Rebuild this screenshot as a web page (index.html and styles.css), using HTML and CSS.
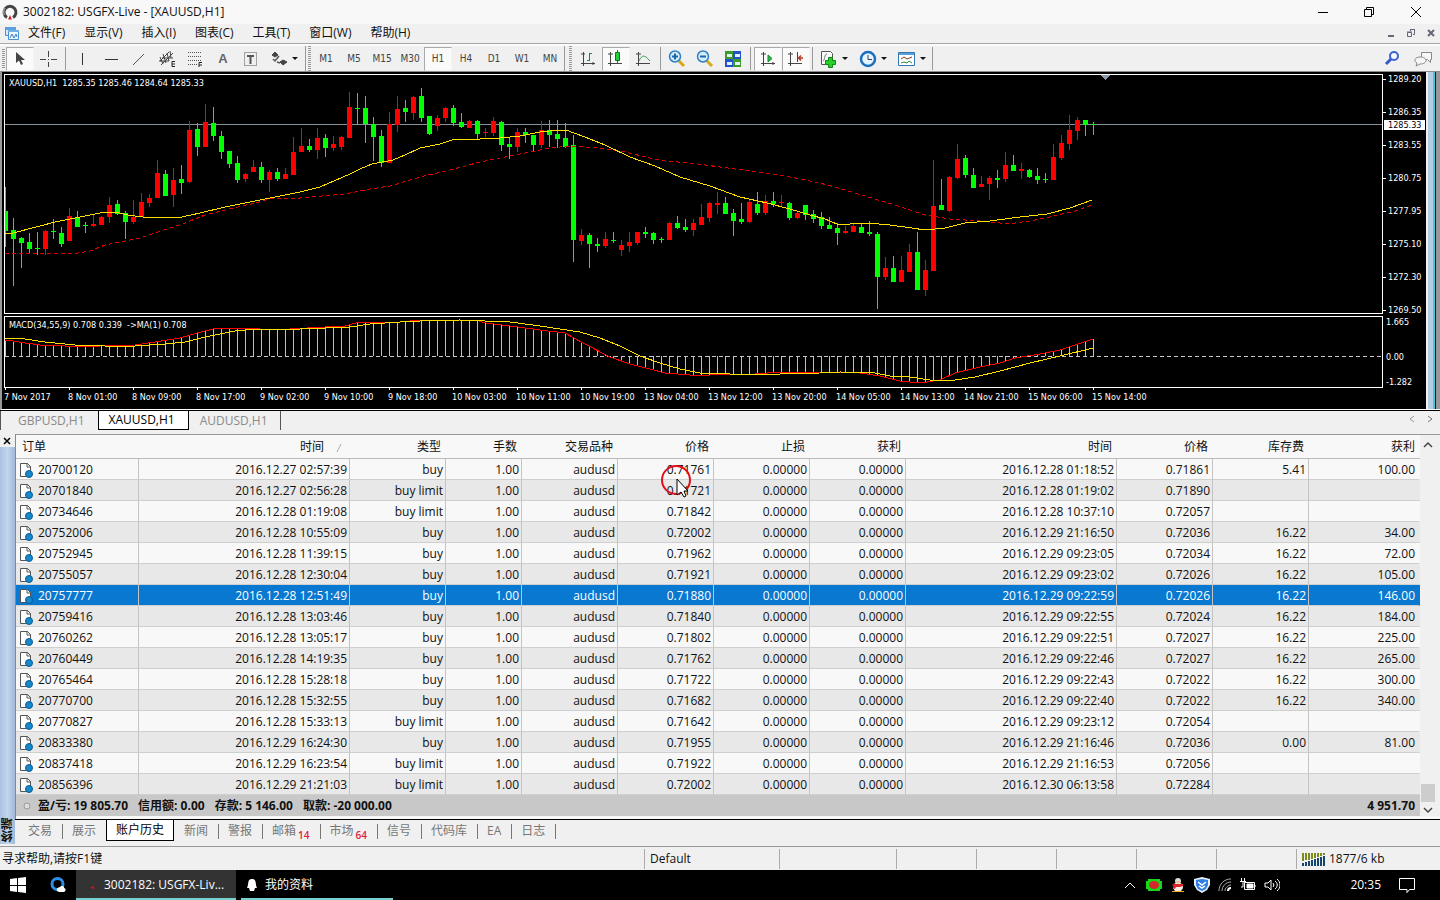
FILE: index.html
```html
<!DOCTYPE html>
<html lang="zh-CN">
<head>
<meta charset="utf-8">
<title>3002182: USGFX-Live - [XAUUSD,H1]</title>
<link rel="stylesheet" href="styles.css">
</head>
<body>
<div class="window">
  <header class="titlebar">
    <svg class="app-icon" width="16" height="16" viewBox="0 0 16 16"><path d="M5 13.5A6 6 0 1 1 11 13.5" fill="none" stroke="#444" stroke-width="3"/><path d="M2.5 11A6.500 6.500 0 0 1 3 4" fill="none" stroke="#999" stroke-width="1.500"/><path d="M6 15.500 8 11l2 4.500z" fill="#d3202a"/></svg>
    <span class="title">3002182: USGFX-Live - [XAUUSD,H1]</span>
    <div class="win-buttons">
      <button aria-label="最小化"><svg width="12" height="12"><path d="M1 6.500h10" stroke="#000"/></svg></button>
      <button aria-label="还原"><svg width="12" height="12" fill="none" stroke="#000"><path d="M1.500 3.500h7v7h-7zM3.500 3.500v-2h7v7h-2"/></svg></button>
      <button aria-label="关闭"><svg width="12" height="12"><path d="M1 1l10 10M11 1L1 11" stroke="#000"/></svg></button>
    </div>
  </header>

  <nav class="menubar">
    <svg class="doc-icon" width="16" height="14" viewBox="0 0 16 14"><path d="M1.500 1.500h10v8h-10z" fill="#d9eafa" stroke="#4b8fd0"/><path d="M1 1h11v3H1z" fill="#5da0dc"/><path d="M4.500 4.500h10v9h-10z" fill="#eef6fd" stroke="#4b8fd0"/><path d="M4 4h11v2H4z" fill="#74afe4"/><path d="M6 12l2-4 2 4 2-4 1 3" fill="none" stroke="#3c7fc4"/></svg>
    <button>文件(F)</button><button>显示(V)</button><button>插入(I)</button><button>图表(C)</button><button>工具(T)</button><button>窗口(W)</button><button>帮助(H)</button>
    <div class="child-buttons">
      <button aria-label="最小化图表"><svg width="10" height="10"><path d="M2 8h6" stroke="#667" stroke-width="2"/></svg></button>
      <button aria-label="还原图表"><svg width="10" height="10" fill="none" stroke="#667"><path d="M1.500 4.500h4v4h-4zM1 4h5M4.500 3V1.500h4v5H7M4 1.500h5"/></svg></button>
      <button aria-label="关闭图表"><svg width="10" height="10"><path d="M2 2l6 6M8 2L2 8" stroke="#667" stroke-width="2"/></svg></button>
    </div>
  </nav>

  <div class="toolbar">
    <i class="grip"></i>
    <button class="tool on" aria-label="光标"><svg viewBox="0 0 20 20"><path d="M6 3v11l3-2.500 2 4.500 2-1-2-4h4z" fill="#444"/></svg></button>
    <button class="tool" aria-label="十字线"><svg viewBox="0 0 20 20"><path d="M10.500 2v6M10.500 13v5M2 10.500h6M13 10.500h6" stroke="#444"/><path d="M10 10h1v1h-1z" fill="#444"/></svg></button>
    <i class="sep"></i>
    <button class="tool" aria-label="垂直线"><svg viewBox="0 0 20 20"><path d="M9.500 4v12" stroke="#333"/></svg></button>
    <button class="tool" aria-label="水平线"><svg viewBox="0 0 20 20"><path d="M4 10.500h13" stroke="#333"/></svg></button>
    <button class="tool" aria-label="趋势线"><svg viewBox="0 0 20 20"><path d="M4 16L15 5" stroke="#555"/></svg></button>
    <button class="tool" aria-label="等距通道"><svg viewBox="0 0 20 20" fill="none" stroke="#444"><path d="M3 12L12 3M4 16L16 4M3 8l3 7M6 5l3 9M10 4l2 8M13 2l1 7M2 12h10M5 9h11"/><path d="M18 12.500h-3v5h3M15 15h3" stroke="#222"/></svg></button>
    <button class="tool" aria-label="斐波那契"><svg viewBox="0 0 20 20"><path d="M3 3.500h14M3 7.500h14M3 11.500h14M3 15.500h9" stroke="#555" stroke-dasharray="1 1"/><path d="M17 13.500h-3V18M14 16h3" fill="none" stroke="#222"/></svg></button>
    <button class="tool letter">A</button>
    <button class="tool" aria-label="文字标签"><svg viewBox="0 0 20 20" fill="none" stroke="#555"><path d="M3.500 3.500h12v13h-12z" stroke-dasharray="1 1"/><path d="M6 7h7M9.500 7v8" stroke-width="2"/></svg></button>
    <button class="tool combo wide" aria-label="箭头"><svg viewBox="0 0 20 20"><path d="M3 6l3-3 3 3-3 2zM11 13l3-2 4 2-4 3z" fill="#444" stroke="#444"/><path d="M4 10l2 2 4-5M8 13l3 1" fill="none" stroke="#555" stroke-width="1.500"/></svg><b class="caret"></b></button>
    <i class="grip split"></i>
    <button class="tool period">M1</button><button class="tool period">M5</button><button class="tool period">M15</button><button class="tool period">M30</button><button class="tool period on">H1</button><button class="tool period">H4</button><button class="tool period">D1</button><button class="tool period">W1</button><button class="tool period">MN</button>
    <i class="grip split late"></i>
    <button class="tool" aria-label="柱状图"><svg viewBox="0 0 20 20" fill="none" stroke="#444"><path d="M5.500 3v14M3 14.500h14M3 5h4M15 13v3"/><path d="M11.500 4v8M9 11.500h3M11 4.500h3" stroke="#1b8c36"/></svg></button>
    <button class="tool on" aria-label="蜡烛图"><svg viewBox="0 0 20 20" fill="none" stroke="#444"><path d="M4.500 3v14M2 14.500h14M2 5h5"/><path d="M11.500 1v13" stroke="#087a1a"/><path d="M9.500 3.500h4v8h-4z" fill="#22d23c" stroke="#087a1a"/></svg></button>
    <button class="tool" aria-label="折线图"><svg viewBox="0 0 20 20" fill="none" stroke="#444"><path d="M4.500 3v14M2 14.500h14M2 5h5"/><path d="M5 12c3-7 6-6 11 0" stroke="#3b9c50"/></svg></button>
    <i class="sep thin"></i>
    <button class="tool" aria-label="放大"><svg viewBox="0 0 20 20"><path d="M12 12l5 5" stroke="#d8a818" stroke-width="3"/><circle cx="8" cy="7.500" r="5.500" fill="#d6ecfb" stroke="#2f7fc2" stroke-width="1.500"/><path d="M5 7.500h6M8 4.500v6" stroke="#1866ab" stroke-width="2"/></svg></button>
    <button class="tool" aria-label="缩小"><svg viewBox="0 0 20 20"><path d="M12 12l5 5" stroke="#d8a818" stroke-width="3"/><circle cx="8" cy="7.500" r="5.500" fill="#d6ecfb" stroke="#2f7fc2" stroke-width="1.500"/><path d="M5 7.500h6" stroke="#1866ab" stroke-width="2"/></svg></button>
    <button class="tool" aria-label="平铺窗口"><svg viewBox="0 0 20 20"><path d="M2 2h8v8H2zM10 10h8v8h-8z" fill="#3c9c2a"/><path d="M10 2h8v8h-8zM2 10h8v8H2z" fill="#2453c8"/><path d="M4 5h5v3H4zM12 5h5v3h-5zM4 13h5v3H4zM12 13h5v3h-5z" fill="#e4f0fc"/></svg></button>
    <i class="sep"></i>
    <button class="tool on" aria-label="自动滚动"><svg viewBox="0 0 20 20" fill="none" stroke="#444"><path d="M5.500 3v14M3 14.500h14M3 5h5M15 13v3"/><path d="M10 6v7l4-3.500z" fill="#2abb40" stroke="#14862a"/></svg></button>
    <button class="tool on" aria-label="图表平移"><svg viewBox="0 0 20 20" fill="none" stroke="#444"><path d="M4.500 3v14M2 14.500h14M2 5h5M11.500 3v10"/><path d="M17 9h-4M15 6.500L12.500 9l2.500 2.500" stroke="#b33a1a" stroke-width="1.500"/></svg></button>
    <i class="sep thin"></i>
    <button class="tool combo" aria-label="指标"><svg viewBox="0 0 20 20"><path d="M2.500 2.500h9l2 2v11h-11z" fill="#fafafa" stroke="#555"/><path d="M4 12c2 0 1-7 4-7" fill="none" stroke="#777"/><path d="M9.500 8.500h4v3h3v4h-3v3h-4v-3h-3v-4h3z" fill="#28cf28" stroke="#0a8a14"/></svg><b class="caret"></b></button>
    <button class="tool combo" aria-label="周期"><svg viewBox="0 0 20 20"><circle cx="10" cy="10" r="7" fill="#e8f4fd" stroke="#1c6fc0" stroke-width="2.500"/><path d="M10 6v4.500h4" fill="none" stroke="#345"/></svg><b class="caret"></b></button>
    <button class="tool combo" aria-label="模板"><svg viewBox="0 0 20 20"><path d="M1.500 3.500h16v13h-16z" fill="#fff" stroke="#3277b5"/><path d="M2 4h15v2H2z" fill="#5a9fd8"/><path d="M4 10l3-2 3 2 5-2" fill="none" stroke="#7c3b1c"/><path d="M4 14l3-1 3 1 2-2 3 2" fill="none" stroke="#2c8c3c"/></svg><b class="caret"></b></button>
    <i class="sep end"></i>
    <div class="tool-right">
      <button class="tool" aria-label="搜索"><svg viewBox="0 0 20 20"><path d="M9 10l-5 5" stroke="#3558c8" stroke-width="3"/><circle cx="12" cy="7" r="4" fill="#f4f8ff" stroke="#3d62d0" stroke-width="2"/></svg></button>
      <button class="tool" aria-label="聊天"><svg viewBox="0 0 20 20" fill="#f7f7f7" stroke="#888"><path d="M8.500 3.500h10v7h-1v3l-3-3h-6z"/><path d="M7 8c8 0 8 7 0 7l-4 2 1-3c-4-2-2-6 3-6z"/></svg></button>
    </div>
  </div>

  <section class="chart" aria-label="XAUUSD,H1">
    <div class="chart-grid">
      <div class="plot main-plot">
        <span class="plot-title">XAUUSD,H1&nbsp; 1285.35 1285.46 1284.64 1285.33</span>
        <svg width="100%" height="100%" shape-rendering="crispEdges"><g id="price"></g></svg>
      </div>
      <div class="axis price-axis"><span>1289.20</span><span>1286.35</span><span>1283.55</span><span>1280.75</span><span>1277.95</span><span>1275.10</span><span>1272.30</span><span>1269.50</span><strong class="price-now">1285.33</strong></div>
      <div class="plot macd-plot">
        <span class="plot-title">MACD(34,55,9) 0.708 0.339&nbsp; -&gt;MA(1) 0.708</span>
        <svg width="100%" height="100%" shape-rendering="crispEdges"><g id="macd"></g></svg>
      </div>
      <div class="axis macd-axis"><span>1.665</span><span class="zero">0.00</span><span>-1.282</span></div>
      <div class="times" id="times"></div>
    </div>
    <i class="chart-edge"></i>
  </section>

  <div class="chart-tabs">
    <button>GBPUSD,H1</button><button class="active">XAUUSD,H1</button><button class="last">AUDUSD,H1</button>
    <div class="tab-scroll"><button aria-label="向左"><svg width="6" height="8"><path d="M5 1L1 4l4 3" fill="none" stroke="#999"/></svg></button><button aria-label="向右"><svg width="6" height="8"><path d="M1 1l4 3-4 3" fill="none" stroke="#777"/></svg></button></div>
  </div>

  <section class="terminal">
    <aside class="side">
      <button aria-label="关闭终端"><svg width="8" height="8"><path d="M1 1l6 6M7 1L1 7" stroke="#000" stroke-width="1.500"/></svg></button>
      <div class="side-bar"><span>终端</span></div>
    </aside>
    <div class="terminal-body">
      <div class="table-area">
        <table>
          <colgroup><col class="c-order"><col class="c-time"><col class="c-mid"><col class="c-lots"><col class="c-mid"><col class="c-mid"><col class="c-mid"><col class="c-mid"><col class="c-time"><col class="c-mid"><col class="c-mid"><col class="c-profit"></colgroup>
          <thead><tr><th>订单</th><th class="sorted">时间<svg width="6" height="8"><path d="M1 8L5 0" stroke="#aaa"/></svg></th><th>类型</th><th>手数</th><th>交易品种</th><th>价格</th><th>止损</th><th>获利</th><th>时间</th><th>价格</th><th>库存费</th><th>获利</th></tr></thead>
          <tbody id="orders"></tbody>
          <tfoot><tr><td colspan="11"><svg width="12" height="12" viewBox="0 0 12 12"><circle cx="6" cy="6" r="3" fill="#ddd" stroke="#999"/></svg><span>盈/亏: 19 805.70</span><span>信用额: 0.00</span><span>存款: 5 146.00</span><span>取款: -20 000.00</span></td><td>4 951.70</td></tr></tfoot>
        </table>
        <div class="scrollbar">
          <svg width="10" height="8"><path d="M1 6l4-4 4 4" fill="none" stroke="#444" stroke-width="1.500"/></svg>
          <i class="thumb"></i>
          <svg width="10" height="8"><path d="M1 2l4 4 4-4" fill="none" stroke="#444" stroke-width="1.500"/></svg>
        </div>
      </div>
      <div class="panel-tabs">
        <button>交易</button><button class="before">展示</button><button class="active">账户历史</button><button class="after">新闻</button><button>警报</button><button>邮箱<sub>14</sub></button><button>市场<sub>64</sub></button><button>信号</button><button>代码库</button><button>EA</button><button>日志</button>
      </div>
    </div>
  </section>

  <footer class="status">
    <span class="s-help">寻求帮助,请按F1键</span><span class="s-a">Default</span><span class="s-b"></span><span class="s-c"></span><span class="s-c"></span><span class="s-c"></span><span class="s-c"></span><span class="s-c"></span>
    <span class="s-net"><svg width="24" height="14"><path d="M1 1v8M4 1v7M7 1v7M10 1v6M13 1v5M16 1v4M19 1v3M22 1v2" stroke="#7d8b1c" stroke-width="2"/><path d="M1 11v3M4 10v4M7 9v5M10 8v6M13 7v7M16 6v8M19 5v9M22 4v10" stroke="#16466c" stroke-width="2"/></svg>1877/6 kb</span>
  </footer>

  <div class="taskbar">
    <button class="start" aria-label="开始"><svg width="16" height="16"><path d="M0 2l7-1v7H0zM8 1l8-1v8H8zM0 9h7v6l-7-1zM8 9h8v7l-8-1z" fill="#fff"/></svg></button>
    <button class="browser" aria-label="浏览器"><svg width="16" height="16"><circle cx="7.500" cy="7" r="5.500" fill="none" stroke="#2d8fe8" stroke-width="3"/><path d="M7 14c-1-3 2-4 3-4 1-2 5-1 4 1 3 1 1 4 0 4H9z" fill="#fff"/></svg></button>
    <button class="task current"><svg width="16" height="16"><path d="M5 11l3-2 2 3z" fill="#c4162a"/></svg>3002182: USGFX-Liv...</button>
    <button class="task other"><svg width="10" height="14"><path d="M5 1c5 0 3 5 5 9l-2 0-1 3H3l-1-3H0C2 6 0 1 5 1z" fill="#fff"/></svg>我的资料</button>
    <div class="tray">
      <svg class="t-up" width="12" height="12"><path d="M1 9l5-5 5 5" fill="none" stroke="#fff"/></svg>
      <svg width="16" height="16"><path d="M2 2h12v2h2v8h-2v2H2v-2H0V4h2z" fill="#17d817"/><ellipse cx="8" cy="8" rx="5" ry="4" fill="#d3282c"/></svg>
      <svg width="16" height="16"><ellipse cx="8" cy="10" rx="5" ry="4.500" fill="#f5f0e8"/><circle cx="8" cy="4" r="3" fill="#ddd"/><path d="M3 7h10v2l-3 1H6l-1 2-2-1z" fill="#e3242b"/><path d="M6 4.500h4l-2 1.500zM2 15h12v-1H2z" fill="#f0a81c"/><path d="M2 8l2-2v4z" fill="#b01c1c"/></svg>
      <svg width="16" height="16"><path d="M0 2l8-2 8 2v6l-3 5-5 3-5-3-3-5z" fill="#e8f2ff"/><path d="M2 3l6-1 6 1v5l-2 4-4 2-4-2-2-4z" fill="#2f7ee6"/><path d="M4 5l4 3 4-3M5 9l3 2 3-2" fill="none" stroke="#fff" stroke-width="1.500"/></svg>
      <svg width="14" height="14" fill="none" stroke="#aaa"><path d="M1 13C1 6 6 1 13 1M4 13c0-5 4-9 9-9M7 13c0-3 3-6 6-6"/><path d="M10 13c0-2 1-3 3-3" stroke="#fff" stroke-width="2"/></svg>
      <svg width="16" height="14" fill="none" stroke="#fff"><path d="M4.500 4.500h10v7h-10zM15 7v2M1.500 0v3M4.500 0v3M0 3.500h6M3 4v5H1"/><path d="M7 6h6v4H7z" fill="#fff"/></svg>
      <svg width="16" height="14" fill="none" stroke="#fff"><path d="M1 5h3l3-3v10L4 9H1zM9 5c1 1 1 3 0 4M11 3c3 2 3 6 0 8M13 1c4 3 4 9 0 12"/></svg>
      <time>20:35</time>
      <svg class="t-note" width="16" height="16"><path d="M.5 1.500h15v11h-5l-2.500 3v-3H.5z" fill="none" stroke="#fff"/></svg>
    </div>
  </div>

  <svg class="pointer" width="34" height="34"><circle cx="16" cy="16" r="14" fill="none" stroke="#e0101c" stroke-width="2"/><path d="M17 15v16l4-3 3 5 2-1-2-5h4z" fill="#fff" stroke="#000"/></svg>
</div>
<script src="script.js"></script>
</body>
</html>
```
FILE: styles.css
```css
* { box-sizing: border-box; }
body { margin: 0; background: #f0f0f0; color: #111; font: 12px/16px "Open Sans", "Noto Sans CJK SC", sans-serif; }
button { margin: 0; padding: 0; border: 0; background: none; color: inherit; font: inherit; white-space: nowrap; }
svg { flex: none; }
.window { position: relative; display: flex; flex-direction: column; min-height: 100vh; overflow: hidden; }

.titlebar { display: flex; align-items: center; height: 24px; padding-left: 2px; gap: 5px; background: #f8f8f8; }
.win-buttons { display: flex; margin-left: auto; }
.win-buttons button { display: grid; place-items: center; width: 46px; height: 20px; }
.win-buttons button:last-child { width: 48px; }

.menubar { display: flex; align-items: center; height: 20px; padding: 0 0 1px 4px; border-bottom: 1px solid #a8a8a8; }
.menubar > button { margin-right: 19px; }
.doc-icon { margin-right: 8px; }
.child-buttons { display: flex; gap: 10px; margin-left: auto; padding-right: 4px; }
.child-buttons button { display: flex; }

.toolbar { display: flex; align-items: center; height: 28px; border-top: 2px solid #fbfbfb; border-bottom: 1px solid #8c8c8c; }
.grip { width: 6px; height: 20px; background: repeating-linear-gradient(#999 0 1px, transparent 1px 2px) 2px 0 / 3px 100% no-repeat; }
.grip.split { width: 7px; height: 25px; border-left: 1px solid #999; }
.grip.late { width: 10px; background-position: 4px 0; }
.sep { width: 7px; height: 23px; background: linear-gradient(#999, #999) 3px 0 / 1px 100% no-repeat; }
.sep.thin { width: 5px; background-position: 2px 0; }
.sep.end { width: 1px; background: #999; }
.tool { display: flex; align-items: center; justify-content: center; width: 28px; height: 24px; color: #444; }
.tool svg { width: 20px; height: 20px; }
.tool.on { background: #fafafa; border: 1px solid #aaa; border-right-color: #f4f4f4; border-bottom-color: #f4f4f4; background-clip: padding-box; }
.tool.letter { font: bold 13px/16px "Liberation Sans", sans-serif; color: #666; }
.tool.period { font: 10px/12px "DejaVu Sans Condensed", "DejaVu Sans", sans-serif; }
.tool.combo { width: 39px; justify-content: flex-start; gap: 3px; padding-left: 4px; }
.tool.wide { width: 40px; }
.caret { border: 3px solid transparent; border-top-color: #111; border-bottom: 0; }
.tool-right { display: flex; gap: 3px; margin-left: auto; padding-right: 3px; }

.chart { display: flex; height: 338px; background: #000; border-left: 2px solid #999; color: #fff; font: 9px/12px "DejaVu Sans Condensed", "DejaVu Sans", sans-serif; border-bottom: 1px solid #fff; overflow: hidden; }
.chart-grid { flex: 1; min-width: 0; display: grid; grid-template-columns: minmax(0, 1fr) 43px; grid-template-rows: 240px 72px 20px; row-gap: 2px; padding: 2px 0 0 2px; }
.plot { position: relative; border: 1px solid #fff; overflow: hidden; }
.plot svg { display: block; }
.plot-title { position: absolute; left: 4px; top: 2px; }
.axis { position: relative; display: flex; flex-direction: column; justify-content: space-between; }
.axis span { display: flex; align-items: center; }
.price-axis { margin: -1px 0 -2px; }
.price-axis span::before { content: ""; width: 3px; height: 1px; margin-right: 2px; background: #fff; }
.price-now { position: absolute; left: 1px; top: 47px; right: 1px; height: 10px; padding-left: 4px; background: #fff; color: #000; font-weight: normal; line-height: 10px; }
.macd-axis { padding-left: 3px; }
.macd-axis .zero { margin-top: 9px; }
.times { grid-column: 1 / -1; display: flex; white-space: nowrap; }
.times span { flex: none; width: 64px; margin-top: 1px; }
.times span::before { content: ""; display: block; width: 1px; height: 3px; margin: -4px 0 1px 1px; background: #fff; }
.chart-edge { width: 14px; background: linear-gradient(90deg, #f0f0f8 0 2px, #b4cce4 2px 7px, #49c5dc 7px 9px, #111 9px 10px, #999 10px); }

.chart-tabs { display: flex; align-items: flex-start; height: 24px; border-top: 1px solid #000; color: #8a8a8a; }
.chart-tabs > button { height: 19px; padding: 0 13px 0 17px; border-left: 1px solid #555; }
.chart-tabs > button.active { padding: 0 13px 0 10px; border: solid #000; border-width: 0 1px 1px; background: #fff; color: #000; }
.chart-tabs > button.last { padding: 0 12px 0 11px; border-left: 0; border-right: 1px solid #555; }
.tab-scroll { display: flex; gap: 12px; margin-left: auto; padding: 0 7px 0 0; }

.terminal { display: flex; flex: 1; border-bottom: 1px solid #999; }
.side { display: flex; flex-direction: column; width: 15px; padding-bottom: 2px; }
.side button { display: grid; place-items: center; height: 13px; width: 14px; }
.side-bar { flex: 1; display: flex; align-items: flex-end; justify-content: center; background: linear-gradient(90deg, #a9c3e0, #c1d6ee 50%, #9fb8d6); }
.side-bar span { writing-mode: vertical-rl; transform: rotate(180deg); line-height: 14px; font-weight: bold; padding-top: 2px; }
.terminal-body { flex: 1; min-width: 0; display: flex; flex-direction: column; }
.table-area { display: flex; border-top: 1px solid #999; border-left: 1px solid #888; background: #f8f8f8; padding-bottom: 3px; }
table { flex: 1; width: 0; table-layout: fixed; border-collapse: separate; border-spacing: 0; }
.c-order { width: 123px; } .c-time { width: 211px; } .c-mid { width: 96px; } .c-lots { width: 76px; } .c-profit { width: 111px; }
th, td { padding: 0 2px 0 0; text-align: right; white-space: nowrap; line-height: 16px; }
th { height: 24px; padding-right: 5px; font-weight: normal; border-bottom: 1px solid #bbb; }
th:first-child { text-align: left; padding-left: 6px; }
th.sorted { padding-right: 8px; }
th svg { margin-left: 12px; vertical-align: -1px; }
tbody td { height: 21px; padding-top: 2px; border-right: 1px solid #c4c4c4; border-bottom: 1px solid #cfcfcf; }
tbody td:last-child { padding-right: 4px; border-right-color: transparent; }
tbody tr:nth-child(even) { background: #e8e8e8; }
tbody tr.selected { background: #0878d0; color: #fff; }
tbody td:first-child { text-align: left; }
td svg { vertical-align: -4px; margin: 0 5px 0 3px; }
tfoot td { height: 21px; background: #c8c8c8; font-weight: bold; padding-right: 5px; }
tfoot td:first-child { text-align: left; }
tfoot span { margin-right: 10px; }
tfoot svg { vertical-align: -2px; margin: 0 5px; }
.scrollbar { display: flex; flex-direction: column; align-items: center; width: 20px; padding: 6px 4px 2px 0; background: #f0f0f0; }
.thumb { width: 14px; height: 18px; margin: auto 0 4px; background: #cdcdcd; }

.panel-tabs { display: flex; align-items: flex-start; height: 27px; border-top: 1px solid #000; background: #f0f0f0; color: #777; }
.panel-tabs button { position: relative; height: 21px; padding: 0 11px 0 9px; }
.panel-tabs button::after { content: ""; position: absolute; right: 0; top: 4px; bottom: 2px; width: 1px; background: #777; }
.panel-tabs button:first-child { padding-left: 13px; }
.panel-tabs .before::after, .panel-tabs .active::after { display: none; }
.panel-tabs .before { padding-right: 10px; }
.panel-tabs .after { padding-left: 10px; }
.panel-tabs .active { padding: 0 9px; border: solid #000; border-width: 0 1px 1px; background: #fff; color: #000; }
.panel-tabs sub { margin-left: 2px; font-size: 10px; line-height: 8px; color: #e0203c; vertical-align: -4px; font-weight: 600; }

.status { display: flex; align-items: center; height: 23px; }
.status span { height: 20px; padding: 2px 5px; border-left: 1px solid #aaa; }
.status .s-help { flex: 1; padding-left: 2px; border: 0; }
.status .s-a { width: 135px; } .status .s-b { width: 117px; } .status .s-c { width: 80px; }
.status .s-net { display: flex; align-items: center; gap: 3px; width: 144px; }

.taskbar { display: flex; height: 30px; background: #000; color: #fff; }
.taskbar button { display: flex; align-items: center; }
.start { width: 50px; }
.taskbar .start { padding-left: 10px; }
.browser { width: 26px; }
.task { border-bottom: 2px solid #76d0d0; }
.current { width: 160px; gap: 3px; }
.taskbar .task { border-bottom: 2px solid #76d0d0; padding-top: 2px; }
.taskbar .current { padding-left: 9px; background: #333; }
.other { width: 152px; gap: 8px; }
.taskbar .other { margin-left: 5px; padding-left: 6px; }
.tray { display: flex; align-items: center; gap: 8px; margin-left: auto; padding-right: 25px; }
.tray .t-up { margin-right: 2px; }
.tray time { margin: 0 10px 0 62px; }
.tray svg:nth-of-type(n + 2) { margin-right: 0; }
.pointer { position: absolute; left: 660px; top: 464px; }
```
FILE: script.js
```js
// Candles: direction, high, body top, body bottom, low. Three units per pixel.
const left = `G 320 392 454 500|G 415 450 478 618|G 470 474 488 565|G 458 486 508 522|G 455 504 507 526|R 450 453 506 524|G 416 453 457 478|G 440 458 492 500|R 385 408 484 484|G 393 410 440 440|G 425 435 438 460|R 405 432 438 440|R 408 410 435 436|R 350 374 410 428|G 360 372 402 405|G 392 398 426 478|R 360 410 426 432|R 338 366 412 412|R 342 354 368 382|R 240 279 355 355|G 270 282 348 348|R 265 300 346 382|G 256 297 308 342|R 122 150 306 310|G 130 147 200 228|R 72 126 201 201|G 80 129 168 182|G 152 168 216 238|G 213 213 252 264|G 228 249 300 310|R 280 282 296 306|R 240 261 276 276|G 245 261 300 310|R 270 276 300 335|G 264 276 297 304|R 265 282 298 298|R 170 216 285 285|R 144 198 216 216|G 178 198 210 216|R 144 174 210 238|G 162 174 204 230|R 168 192 204 214|R 168 171 202 210|R 36 81 174 174|G 40 84 87 135|G 48 84 132 190|G 110 132 170 244|G 150 168 248 262|R 97 132 248 248|R 48 87 135 155|G 60 84 97 125|R 48 51 98 120|G 25 48 114 126|G 108 108 162 165|R 105 114 138 152|R 80 84 114 125|G 75 84 129 138|G 98 126 141 143|R 120 123 143 144|G 120 123 162 180|R 145 156 160 170|R 110 123 160 168|G 123 126 195 212|G 170 192 201 238|R 145 156 201 216|G 145 156 165 190|G 165 165 195 213|R 122 150 195 204|G 120 150 164 202|G 120 162 177 204|G 130 174 201 205|G 165 195 480 545|R 448 465 483 496|G 460 465 492 565|G 475 491 497 516|R 456 477 498 504|G 456 479 483 488|R 480 494 510 528|R 456 486 498 516|R 456 457 489 494|G 440 455 461 475|G 457 459 480 492|G 470 477 480 490|R 425 429 480 480|G 408 429 444 446|G 418 441 450 455|R 418 429 450 468|R 372 411 436 436|R 367 369 414 425|R 335 369 374 402|G 350 369 402 402|G 388 399 423 468`;
const right = `G 308 357 366 372|R 300 306 366 370|G 275 312 339 346|R 285 303 339 345|G 276 303 312 322|R 285 305 309 320|G 305 309 354 360|R 335 338 354 356|G 315 315 345 360|G 330 342 356 368|G 335 350 378 388|G 352 375 387 388|G 370 384 399 435|R 378 392 400 402|R 368 378 396 396|G 372 381 398 400|G 364 396 402 408|G 396 402 531 628|R 470 504 531 540|G 468 504 546 546|R 468 510 546 546|R 432 456 516 516|G 395 456 570 570|R 480 510 570 588|R 180 318 513 513|G 236 315 330 330|R 228 231 333 336|R 132 178 234 236|G 165 174 225 234|G 204 225 264 264|R 228 252 262 262|R 228 234 252 300|G 210 234 239 265|R 155 195 238 245|G 165 195 213 214|R 190 207 212 238|G 207 210 231 235|G 204 228 240 252|G 220 236 240 250|R 132 171 240 240|R 105 129 174 180|R 45 90 132 150|R 50 60 93 120|G 60 60 75 107|G 67 72 75 106`;
const parse = (text, base) => text.split("|").map(c => {
  const [dir, ...v] = c.split(" ");
  return [dir, ...v.map(n => Math.round(n / 3 + base))];
});
const candles = [...parse(left, 80), ...parse(right, 100)];

const fast = "5,234 13,233 40,226 55,222 70,219 100,213 115,212 128,215 150,218 182,217 200,213 225,207 270,198 300,192 320,187 350,174 360,169 372,164 393,160 405,155 420,148 440,144 452,140 480,139 500,138 520,136 540,132 558,130 566,130 585,137 605,145 630,157 655,166 680,177 700,183 710,186 740,197 767,203 790,209 810,215 825,219 837,224 850,224 867,223 890,225 912,228 925,230 945,228 965,223 990,221 1020,217 1047,214 1070,208 1092,200";
const slow = "5,253 40,254 78,253 90,251 105,245 140,238 155,233 185,223 205,215 225,210 255,203 270,199 300,198 345,194 370,189 390,186 420,177 450,170 480,162 500,158 520,154 550,148 570,146 600,148 625,152 650,158 665,161 690,163 720,167 735,169 750,171 780,175 820,183 845,190 875,199 895,205 925,215 950,219 980,221 1000,223 1015,223 1030,221 1050,217 1075,211 1092,205";
const macdLine = "5,340 13,341 25,343 40,345 65,346 100,346 135,345 155,342 180,338 197,333 213,329 230,328 260,329 290,329 325,327 345,326 360,322 390,323 410,321 450,320 475,320 486,323 510,326 540,330 565,333 583,343 610,357 630,364 650,369 665,373 690,375 710,375 730,374 755,374 780,372 830,372 860,373 880,376 900,381 920,383 940,380 955,373 980,367 1000,363 1015,358 1040,354 1060,350 1075,345 1093,339";
const signalLine = "5,338 25,339 45,342 75,345 105,346 135,346 165,344 185,342 205,337 235,331 255,329 300,329 350,327 370,324 400,322 420,321 460,320 510,322 540,326 580,332 600,338 620,346 640,356 660,363 680,369 700,373 730,374 750,375 780,374 820,373 840,372 875,373 890,376 910,377 930,380 955,380 975,377 1000,371 1030,363 1060,356 1093,348";

const line = (points, color, extra = "") => `<polyline points="${points}" fill="none" stroke="${color}" ${extra}/>`;

const price = document.getElementById("price");
price.setAttribute("transform", "translate(-5 -75)");
price.innerHTML = `<path d="M5 124.5h4000" stroke="#8a939c"/>` + candles.map(([dir, hi, top, bottom, lo], i) => {
  const x = 5 + i * 8;
  const color = dir === "G" ? "#00ff00" : "#ff0000";
  return `<rect x="${x}" y="${hi}" width="1" height="${Math.max(1, lo - hi)}" fill="${color}"/><rect x="${x - 2}" y="${top}" width="5" height="${Math.max(1, bottom - top)}" fill="${color}"/>`;
}).join("") + line(slow, "#e00000", 'stroke-dasharray="4 3"') + line(fast, "#ffe000") +
  `<path d="M1101 75h9l-4.500 5z" fill="#8a9aa8"/>`;

// Height of a polyline at a given x, used for the histogram bars.
const points = macdLine.split(" ").map(p => p.split(",").map(Number));
const at = x => {
  const k = Math.max(1, points.findIndex(p => p[0] >= x));
  const [a, b] = [points[k - 1], points[k]];
  return a[1] + (b[1] - a[1]) * (x - a[0]) / (b[0] - a[0]);
};
const bars = candles.map((_, i) => `M${5.5 + i * 8} 356V${Math.round(at(5 + i * 8))}`).join("");
const macd = document.getElementById("macd");
macd.setAttribute("transform", "translate(-5 -317)");
macd.innerHTML = `<path d="M5 356.5h4000" stroke="#c8c8c8" stroke-dasharray="4 3"/><path d="${bars}" stroke="#c0c0c0"/>` +
  line(macdLine, "#ff0000") + line(signalLine, "#ffe000");

document.getElementById("times").innerHTML = ["7 Nov 2017", "8 Nov 01:00", "8 Nov 09:00", "8 Nov 17:00", "9 Nov 02:00", "9 Nov 10:00", "9 Nov 18:00", "10 Nov 03:00", "10 Nov 11:00", "10 Nov 19:00", "13 Nov 04:00", "13 Nov 12:00", "13 Nov 20:00", "14 Nov 05:00", "14 Nov 13:00", "14 Nov 21:00", "15 Nov 06:00", "15 Nov 14:00"].map(t => `<span>${t}</span>`).join("");

const icon = '<svg width="14" height="16" viewBox="0 0 14 16"><path d="M1.500 1.500h7l3 3v10h-10z" fill="#fff" stroke="#555"/><path d="M8 1v4h4" fill="none" stroke="#555"/><circle cx="10" cy="12" r="3.500" fill="#1688cc" stroke="#0c5c94"/></svg>';
const orders = `20700120;27 02:57:39;buy;0.71761;28 01:18:52;0.71861;5.41;100.00
20701840;27 02:56:28;buy limit;0.71721;28 01:19:02;0.71890;;
20734646;28 01:19:08;buy limit;0.71842;28 10:37:10;0.72057;;
20752006;28 10:55:09;buy;0.72002;29 21:16:50;0.72036;16.22;34.00
20752945;28 11:39:15;buy;0.71962;29 09:23:05;0.72034;16.22;72.00
20755057;28 12:30:04;buy;0.71921;29 09:23:02;0.72026;16.22;105.00
20757777;28 12:51:49;buy;0.71880;29 09:22:59;0.72026;16.22;146.00
20759416;28 13:03:46;buy;0.71840;29 09:22:55;0.72024;16.22;184.00
20760262;28 13:05:17;buy;0.71802;29 09:22:51;0.72027;16.22;225.00
20760449;28 14:19:35;buy;0.71762;29 09:22:46;0.72027;16.22;265.00
20765464;28 15:28:18;buy;0.71722;29 09:22:43;0.72022;16.22;300.00
20770700;28 15:32:55;buy;0.71682;29 09:22:40;0.72022;16.22;340.00
20770827;28 15:33:13;buy limit;0.71642;29 09:23:12;0.72054;;
20833380;29 16:24:30;buy;0.71955;29 21:16:46;0.72036;0.00;81.00
20837418;29 16:23:54;buy limit;0.71922;29 21:16:53;0.72056;;
20856396;29 21:21:03;buy limit;0.72002;30 06:13:58;0.72284;;`;
document.getElementById("orders").innerHTML = orders.split("\n").map(row => {
  const [id, opened, type, open, closed, close, swap, profit] = row.split(";");
  const cells = [icon + id, "2016.12." + opened, type, "1.00", "audusd", open, "0.00000", "0.00000", "2016.12." + closed, close, swap, profit];
  return `<tr${id === "20757777" ? ' class="selected"' : ""}>${cells.map(c => `<td>${c}</td>`).join("")}</tr>`;
}).join("");
```
